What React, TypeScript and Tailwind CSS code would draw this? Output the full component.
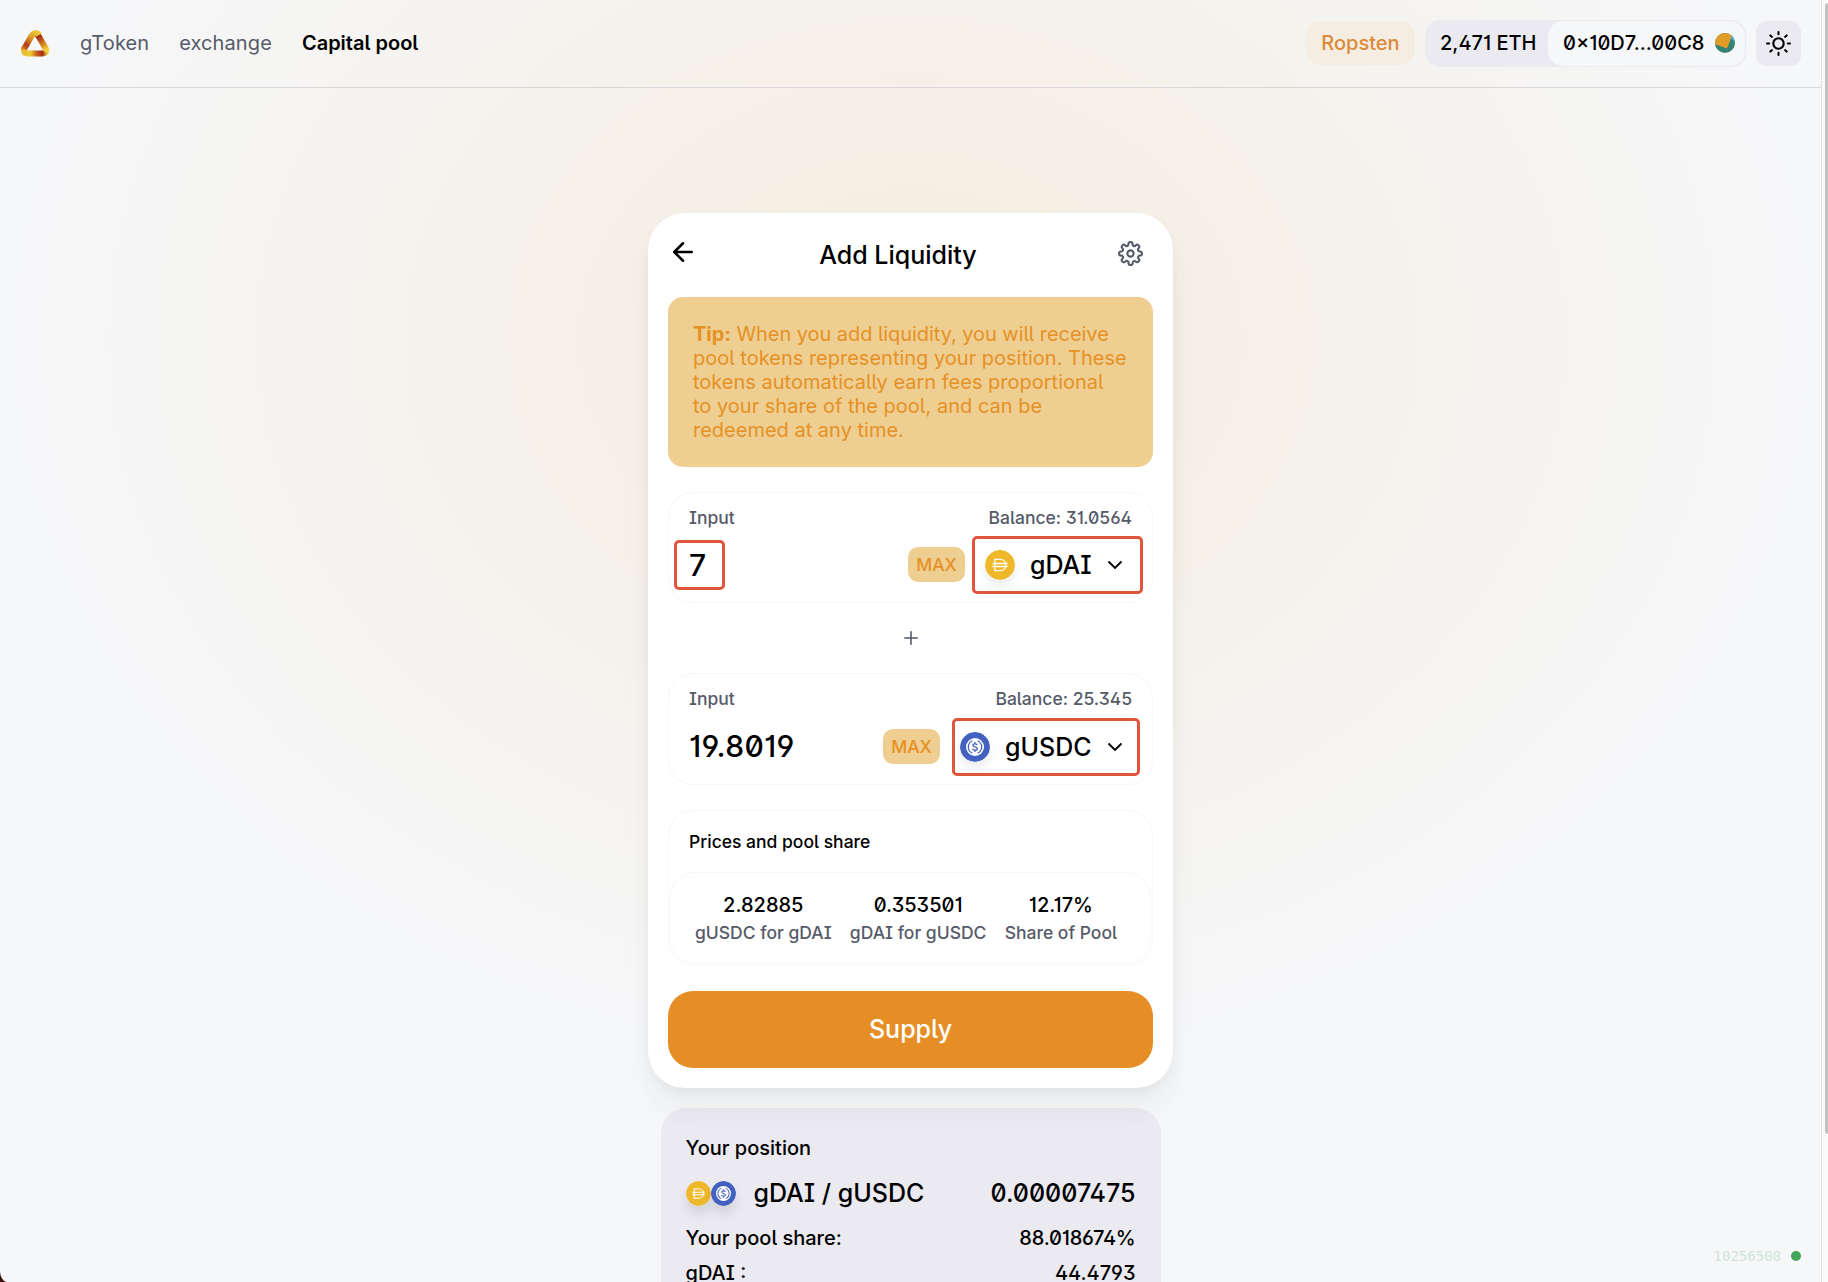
import React from "react";

const features = { fontFeatureSettings: "'ss01' on, 'ss02' on, 'cv01' on, 'cv03' on" };

function Logo() {
  return (
    <svg width="28" height="27" viewBox="0 0 28 27">
      <defs>
        <linearGradient id="la" gradientUnits="userSpaceOnUse" x1="1" y1="21" x2="14" y2="1">
          <stop offset="0" stopColor="#e2a52b" />
          <stop offset="0.3" stopColor="#b23a18" />
          <stop offset="0.6" stopColor="#d78a22" />
          <stop offset="1" stopColor="#eecb35" />
        </linearGradient>
        <linearGradient id="lb" gradientUnits="userSpaceOnUse" x1="13" y1="3" x2="26" y2="22">
          <stop offset="0" stopColor="#c0541c" />
          <stop offset="0.25" stopColor="#a42a16" />
          <stop offset="0.6" stopColor="#d2801f" />
          <stop offset="0.9" stopColor="#f1d237" />
        </linearGradient>
        <linearGradient id="lc" gradientUnits="userSpaceOnUse" x1="1" y1="0" x2="25" y2="0">
          <stop offset="0" stopColor="#e8bb30" />
          <stop offset="0.35" stopColor="#efc933" />
          <stop offset="0.6" stopColor="#c8651e" />
          <stop offset="0.85" stopColor="#a42a16" />
          <stop offset="1" stopColor="#e0a02a" />
        </linearGradient>
      </defs>
      <g fill="none" strokeWidth="6">
        <path d="M13.5 3.400Q16 3.400 17.800 6.500L24.900 18.900Q26.200 22 22.500 23.400" stroke="url(#lb)" />
        <path d="M3.400 18Q1.600 23.600 7 23.600H21Q23.300 23.600 24.300 22" stroke="url(#lc)" />
        <path d="M3 19.600 L3.100 18.900 10.200 6.500Q12 3.300 14.500 3.300 17 3.300 18 5" stroke="url(#la)" />
      </g>
    </svg>
  );
}

function Dai({ className }: { className: string }) {
  return (
    <svg className={className} viewBox="0 0 32 32">
      <circle cx="16" cy="16" r="16" fill="#eeb82a" />
      <g fill="none" stroke="#fff" strokeWidth="1.4">
        <path d="M10.500 10H16C24.500 10 24.500 22 16 22H10.500Z" />
        <path d="M8 14.400H24M8 17.600H24" />
      </g>
    </svg>
  );
}

function Usdc({ className }: { className: string }) {
  return (
    <svg className={className} viewBox="0 0 32 32">
      <circle cx="16" cy="16" r="16" fill="#4361c0" />
      <circle cx="16" cy="16" r="9.600" fill="#fff" />
      <g fill="none" stroke="#4361c0">
        <path d="M13.200 9.400A7.200 7.200 0 0 0 13.200 22.600M18.800 9.400A7.200 7.200 0 0 1 18.800 22.600" strokeWidth="1.300" />
        <path d="M18.400 14C18.200 12.200 13.700 12.200 13.700 14.100C13.700 16.300 18.500 15.600 18.500 17.900C18.500 19.900 13.600 19.800 13.500 17.900M16 10.600V12.600M16 19.400V21.400" strokeWidth="1.400" />
      </g>
    </svg>
  );
}

function Chevron() {
  return (
    <svg width="16" height="10" viewBox="0 0 16 10" fill="none" stroke="#000" strokeWidth="1.9">
      <path d="M1.500 1.500 8 8 14.500 1.500" />
    </svg>
  );
}

function InputPanel(props: {
  balance: string;
  value: string;
  symbol: string;
  icon: React.ReactNode;
  boxed?: boolean;
  panel: string;
  max: string;
  frame: string;
}) {
  return (
    <section className={props.panel}>
      <div className="flex h-5 items-center justify-between text-[17.5px] font-medium text-[#565a69]">
        <span>Input</span>
        <span>{props.balance}</span>
      </div>
      <div className="relative mt-[8px] flex h-[56px] items-center">
        <span className="pt-[2px] text-[30px] font-medium tracking-[0.3px]">{props.value}</span>
        {props.boxed && (
          <span className="absolute left-[-15px] top-[4px] h-[50px] w-[51px] rounded-[5px] border-3 border-[#de4228]/90" />
        )}
        <button className={props.max}>MAX</button>
        <div className={props.frame}>
          {props.icon}
          <span className="ml-[15px] pt-[2px] text-[25px] font-medium">{props.symbol}</span>
          <span className="ml-auto">
            <Chevron />
          </span>
        </div>
      </div>
    </section>
  );
}

function Stat({ value, label }: { value: string; label: string }) {
  return (
    <div className="flex flex-col items-center">
      <span className="h-[25px] text-[20px] font-medium leading-[25px]">{value}</span>
      <span className="mt-[4px] text-[17.5px] font-medium leading-[22px] text-[#565a69]">{label}</span>
    </div>
  );
}

export default function App() {
  return (
    <div
      className="relative flex h-[1282px] w-[1828px] overflow-hidden bg-[#f6f7f9] font-['Inter',sans-serif] text-black"
      style={features}
    >
      <div className="flex w-[1821px] flex-col bg-[radial-gradient(911px_725px_at_911px_340px,#f5ecdd_0%,#f5f1e9_40%,#f6f7f9_100%)]">
        <header className="flex h-[88px] shrink-0 items-center border-b border-[#d9d9dc] pb-px pl-[21px] pr-[20px] text-[20px]">
          <Logo />
          <nav className="ml-[31px] flex items-center gap-[30px] tracking-[0.1px] text-[#565a69]">
            <a>gToken</a>
            <a>exchange</a>
            <a className="font-semibold tracking-normal text-black">Capital pool</a>
          </nav>
          <div className="ml-auto flex items-center font-medium">
            <div className="flex h-[44px] w-[109px] items-center justify-center rounded-[15px] bg-[#f5ede2] text-[#db8a3a]">Ropsten</div>
            <div className="ml-[10px] flex h-[47px] w-[321px] items-center rounded-[15px] bg-[#ebeaf0] p-px pl-[15px]">
              <span className="whitespace-nowrap">2,471 ETH</span>
              <div className="ml-auto flex h-[45px] w-[197px] items-center justify-between rounded-[15px] bg-[#f6f7f9] pl-[15px] pr-[10px]">
                <span>0×10D7...00C8</span>
                <svg width="20" height="20" viewBox="0 0 20 20">
                  <defs>
                    <clipPath id="av">
                      <circle cx="10" cy="10" r="10" />
                    </clipPath>
                  </defs>
                  <g clipPath="url(#av)">
                    <rect width="20" height="20" fill="#338272" />
                    <path d="M14 0H20V9L15 5Z" fill="#3faad8" />
                    <path d="M-1 -3H13L16.500 4 12 15.500-1 11Z" fill="#e29b27" />
                  </g>
                </svg>
              </div>
            </div>
            <div className="ml-[10px] flex h-[45px] w-[45px] items-center justify-center rounded-[10px] bg-[#ebeaf0]">
              <svg width="25" height="25" viewBox="0 0 24 24" fill="none" stroke="#000" strokeWidth="2" strokeLinecap="round" strokeLinejoin="round">
                <circle cx="12" cy="12" r="5" />
                <path d="M12 1v2M12 21v2M4.22 4.22l1.42 1.42M18.36 18.36l1.42 1.42M1 12h2M21 12h2M4.22 19.78l1.42-1.42M18.36 5.64l1.42-1.42" />
              </svg>
            </div>
          </div>
        </header>

        <main className="flex flex-col items-center">
          <div className="z-10 mt-[125px] flex h-[875px] w-[525px] flex-col rounded-[37px] bg-white px-5 shadow-[0_0_1px_rgba(0,0,0,0.01),0_5px_10px_rgba(0,0,0,0.04),0_20px_30px_rgba(0,0,0,0.04),0_30px_40px_rgba(0,0,0,0.01)]">
            <div className="flex h-[84px] items-center justify-between">
              <svg className="-mt-[6px]" width="30" height="30" viewBox="0 0 24 24" fill="none" stroke="#000" strokeWidth="2" strokeLinecap="round" strokeLinejoin="round">
                <path d="M19 12H5M12 19l-7-7 7-7" />
              </svg>
              <h1 className="mr-[20px] pt-[2px] text-[25px] font-medium">Add Liquidity</h1>
              <svg className="-mt-[3px] mr-[10px]" width="25" height="25" viewBox="0 0 24 24" fill="none" stroke="#565a69" strokeWidth="2">
                <circle cx="12" cy="12" r="3" />
                <path d="M19.4 15a1.65 1.65 0 0 0 .33 1.82l.06.06a2 2 0 0 1-2.83 2.83l-.06-.06a1.65 1.65 0 0 0-2.8 1.17V21a2 2 0 0 1-4 0v-.09A1.65 1.65 0 0 0 7.1 19.73l-.06.06a2 2 0 0 1-2.83-2.83l.06-.06A1.65 1.65 0 0 0 3.09 14H3a2 2 0 0 1 0-4h.09A1.65 1.65 0 0 0 4.27 7.1l-.06-.06a2 2 0 0 1 2.83-2.83l.06.06A1.65 1.65 0 0 0 10 3.09V3a2 2 0 0 1 4 0v.09a1.65 1.65 0 0 0 2.9 1.18l.06-.06a2 2 0 0 1 2.83 2.83l-.06.06A1.65 1.65 0 0 0 20.91 10H21a2 2 0 0 1 0 4h-.09a1.65 1.65 0 0 0-1.51 1z" />
              </svg>
            </div>

            <p className="h-[170px] rounded-[15px] bg-[#efcf91] px-[25px] pt-[25px] text-[20px] leading-[24px] text-[#e59126]">
              <span className="tracking-[-0.06px]">
                <b className="font-bold">Tip:</b> When you add liquidity, you will receive
              </span>
              <br />
              pool tokens representing your position. These
              <br />
              tokens automatically earn fees proportional
              <br />
              to your share of the pool, and can be
              <br />
              redeemed at any time.
            </p>

            <div className="mt-[25px]">
              <InputPanel
                balance="Balance: 31.0564"
                value="7"
                symbol="gDAI"
                boxed
                icon={<Dai className="size-[30px] rounded-full shadow-[0_6px_10px_rgba(0,0,0,0.08)]" />}
                panel="flex h-[111px] flex-col rounded-[25px] border border-[#f6f7f9] px-5 pt-[15px]"
                max="absolute left-[219px] top-[11px] h-[35px] w-[57px] rounded-[10px] bg-[#efcf91] pt-px text-[17.5px] font-medium text-[#e59126]"
                frame="absolute left-[283px] top-0 flex h-[58px] w-[171px] items-center rounded-[5px] border-3 border-[#de4228]/90 pl-[10px] pr-[17px]"
              />
            </div>

            <div className="flex h-[70px] items-center justify-center">
              <svg width="14" height="14" viewBox="0 0 14 14" stroke="#565a69" strokeWidth="1.6" strokeLinecap="round">
                <path d="M7 .8V13.2M.8 7H13.2" />
              </svg>
            </div>

            <InputPanel
              balance="Balance: 25.345"
              value="19.8019"
              symbol="gUSDC"
              icon={<Usdc className="size-[30px] rounded-full shadow-[0_6px_10px_rgba(0,0,0,0.08)]" />}
              panel="flex h-[112px] flex-col rounded-[25px] border border-[#f6f7f9] px-5 pt-[15px]"
              max="absolute left-[194px] top-[12px] h-[35px] w-[57px] rounded-[10px] bg-[#efcf91] pt-px text-[17.5px] font-medium text-[#e59126]"
              frame="absolute left-[263px] top-px flex h-[58px] w-[188px] items-center rounded-[5px] border-3 border-[#de4228]/90 pl-[5px] pr-[14px]"
            />

            <section className="mt-[25px] flex h-[156px] flex-col rounded-[25px] border border-[#f6f7f9] px-px pb-px">
              <h2 className="flex h-[61px] items-center pl-[19px] pt-[2px] text-[17.5px] font-medium">Prices and pool share</h2>
              <div className="flex h-[92px] justify-between rounded-[25px] border border-[#f6f7f9] pl-[24px] pr-[33px] pt-[20px]">
                <Stat value="2.82885" label="gUSDC for gDAI" />
                <Stat value="0.353501" label="gDAI for gUSDC" />
                <Stat value="12.17%" label="Share of Pool" />
              </div>
            </section>

            <button className="mt-[25px] h-[77px] rounded-[25px] bg-[#e58e25] text-[25px] font-medium text-white">Supply</button>
          </div>

          <div className="mt-5 flex h-[220px] w-[500px] flex-col rounded-[25px] bg-[#ebeaf0] px-[25px] pt-[27px] text-[20px] font-medium">
            <div className="leading-[26px]">Your position</div>
            <div className="mt-[17px] flex h-[30px] items-center text-[25px]">
              <Dai className="size-[25px] rounded-full shadow-[0_8px_12px_rgba(0,0,0,0.1)]" />
              <Usdc className="size-[25px] rounded-full shadow-[0_8px_12px_rgba(0,0,0,0.1)]" />
              <span className="ml-[18px] pt-[2px]">gDAI / gUSDC</span>
              <span className="ml-auto pt-[2px]">0.00007475</span>
            </div>
            <div className="mt-[17px] flex justify-between leading-[26px]">
              <span>Your pool share:</span>
              <span className="tracking-[-0.2px]">88.018674%</span>
            </div>
            <div className="mt-[9px] flex justify-between leading-[26px]">
              <span>gDAI :</span>
              <span>44.4793</span>
            </div>
          </div>
        </main>
      </div>

      <aside className="w-[7px] border-l border-[#e2e2e4] bg-[#fafafa] pl-[3px] pt-[3px]">
        <div className="h-[1131px] rounded-l-[3px] bg-[#c1c1c1]" />
      </aside>

      <div className="absolute bottom-[16px] right-[27px] flex items-center gap-[10px] font-['DejaVu_Sans_Mono',monospace] text-[14px] leading-[20px] text-[#cfe5d6]">
        <span>10256500</span>
        <span className="size-[10px] rounded-full bg-[#42a55a]" />
      </div>
      <svg className="absolute bottom-0 left-0" width="6" height="10" viewBox="0 0 6 10">
        <path d="M0 0C.5 5 2.5 8.500 6 10H0Z" fill="#3a0f0c" />
      </svg>
    </div>
  );
}
